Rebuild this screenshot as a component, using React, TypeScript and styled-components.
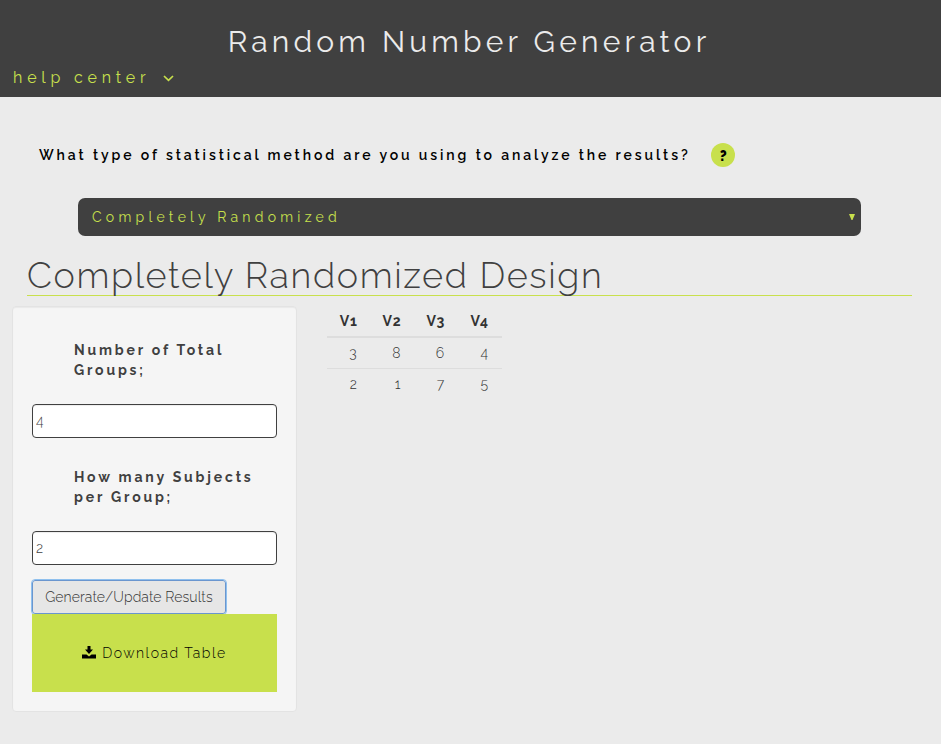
import React from 'react';
import styled, { createGlobalStyle } from 'styled-components';

const GlobalStyle = createGlobalStyle`
  *, *::before, *::after { box-sizing: border-box; }
  body {
    margin: 0;
    background: #ebebeb;
    color: #333;
    font: 300 14px/20px Raleway, Lato, sans-serif;
  }
`;

const Header = styled.header`
  display: flex;
  flex-direction: column;
  height: 97px;
  padding-top: 25px;
  background: #404040;
`;

const Title = styled.h1`
  margin: 0;
  padding-right: 3px;
  font-size: 30px;
  font-weight: 400;
  line-height: 34px;
  letter-spacing: 4.2px;
  text-align: center;
  color: #ebebeb;
`;

const HelpLink = styled.a`
  display: flex;
  align-items: center;
  gap: 13px;
  margin: 9px 0 0 13px;
  font-size: 16px;
  font-weight: 400;
  line-height: 20px;
  letter-spacing: 4.8px;
  color: #c8e04c;
`;

const Question = styled.div`
  display: flex;
  align-items: center;
  height: 24px;
  margin: 46px 0 0 39px;
  font-weight: 600;
  letter-spacing: 2.9px;
  color: #000;
`;

const HelpBadge = styled.span`
  display: flex;
  align-items: center;
  justify-content: center;
  width: 24px;
  height: 24px;
  margin-left: 20px;
  padding: 2px 0 0 1px;
  border-radius: 50%;
  background: #c8e04c;
  font-weight: 900;
  letter-spacing: 0;
`;

const Select = styled.div`
  display: flex;
  align-items: center;
  justify-content: space-between;
  width: 783px;
  height: 38px;
  margin: 31px 0 0 78px;
  padding: 0 6px 0 14px;
  border-radius: 7px;
  background: #404040;
  font-weight: 400;
  letter-spacing: 4.24px;
  color: #c8e04c;
`;

const SectionTitle = styled.h2`
  height: 40px;
  margin: 20px 29px 0 27px;
  border-bottom: 1px solid #c8e04c;
  font-size: 36px;
  font-weight: 300;
  line-height: 39px;
  letter-spacing: 1.63px;
  color: #404040;
`;

const Columns = styled.main`
  display: flex;
  align-items: flex-start;
  gap: 30px;
  padding: 10px 0 0 12px;
`;

const Panel = styled.form`
  display: flex;
  flex-direction: column;
  align-items: flex-start;
  width: 285px;
  height: 406px;
  padding: 33px 19px 0;
  border: 1px solid #e3e3e3;
  border-radius: 4px;
  background: #f5f5f5;
  box-shadow: inset 0 1px 1px rgba(0, 0, 0, 0.05);
`;

const Label = styled.label`
  width: 190px;
  margin: 0 0 24px 42px;
  font-weight: 700;
  letter-spacing: 2.82px;
  color: #404040;
`;

const Field = styled.input<{ $gap: number }>`
  width: 245px;
  height: 34px;
  margin: 0 0 ${p => p.$gap}px;
  padding: 0 3px 1px;
  border: 1px solid #404040;
  border-radius: 4px;
  background: #fff;
  box-shadow: inset 0 1px 1px rgba(0, 0, 0, 0.075);
  font: inherit;
  color: #404040;
`;

const GenerateButton = styled.button`
  width: 194px;
  height: 34px;
  padding: 0;
  border: 1px solid #6a96cf;
  border-radius: 3px;
  outline: 1px solid #8fc0ee;
  outline-offset: 0;
  background: #e6e6e6;
  font: inherit;
  letter-spacing: 0.1px;
  color: #333;
`;

const DownloadButton = styled.button`
  display: flex;
  align-items: center;
  justify-content: center;
  gap: 6px;
  width: 245px;
  height: 78px;
  padding: 0;
  border: 0;
  background: #c8e04c;
  font: inherit;
  letter-spacing: 1.5px;
  color: #000;
`;

const Table = styled.table`
  width: 175px;
  border-collapse: collapse;
  table-layout: fixed;
`;

const HeadCell = styled.th`
  height: 31px;
  padding: 0 13px 1px 0;
  border-bottom: 2px solid #ddd;
  font-weight: 700;
  letter-spacing: 0.9px;
  text-align: right;
`;

const Cell = styled.td`
  height: 31px;
  padding: 0 14px 0 0;
  border-top: 1px solid #ddd;
  text-align: right;
`;

const columns = ['V1', 'V2', 'V3', 'V4'];
const rows = [
  [3, 8, 6, 4],
  [2, 1, 7, 5],
];

export default function App() {
  return (
    <>
      <GlobalStyle />
      <Header>
        <Title>Random Number Generator</Title>
        <HelpLink>
          help center
          <svg width="11" height="7" viewBox="0 0 11 7">
            <path d="M1 1l4.500 4.300L10 1" fill="none" stroke="currentColor" strokeWidth="1.7" />
          </svg>
        </HelpLink>
      </Header>
      <Question>
        What type of statistical method are you using to analyze the results?
        <HelpBadge>?</HelpBadge>
      </Question>
      <Select>
        Completely Randomized
        <svg width="6" height="6" viewBox="0 0 6 6">
          <path d="M0 0h6L3.500 6h-1z" fill="currentColor" />
        </svg>
      </Select>
      <SectionTitle>Completely Randomized Design</SectionTitle>
      <Columns>
        <Panel>
          <Label>Number of Total Groups;</Label>
          <Field $gap={29} defaultValue="4" />
          <Label>How many Subjects per Group;</Label>
          <Field $gap={15} defaultValue="2" />
          <GenerateButton type="button">Generate/Update Results</GenerateButton>
          <DownloadButton type="button">
            <svg width="14" height="14" viewBox="0 0 14 14">
              <path
                d="M5.500 0h3v3.500H11L7 8 3 3.500h2.500zM0 8.500h4.500L7 10.500l2.500-2H14v4H0z"
                fill="currentColor"
              />
            </svg>
            Download Table
          </DownloadButton>
        </Panel>
        <Table>
          <thead>
            <tr>{columns.map(name => <HeadCell key={name}>{name}</HeadCell>)}</tr>
          </thead>
          <tbody>
            {rows.map((row, i) => (
              <tr key={i}>{row.map(value => <Cell key={value}>{value}</Cell>)}</tr>
            ))}
          </tbody>
        </Table>
      </Columns>
    </>
  );
}
